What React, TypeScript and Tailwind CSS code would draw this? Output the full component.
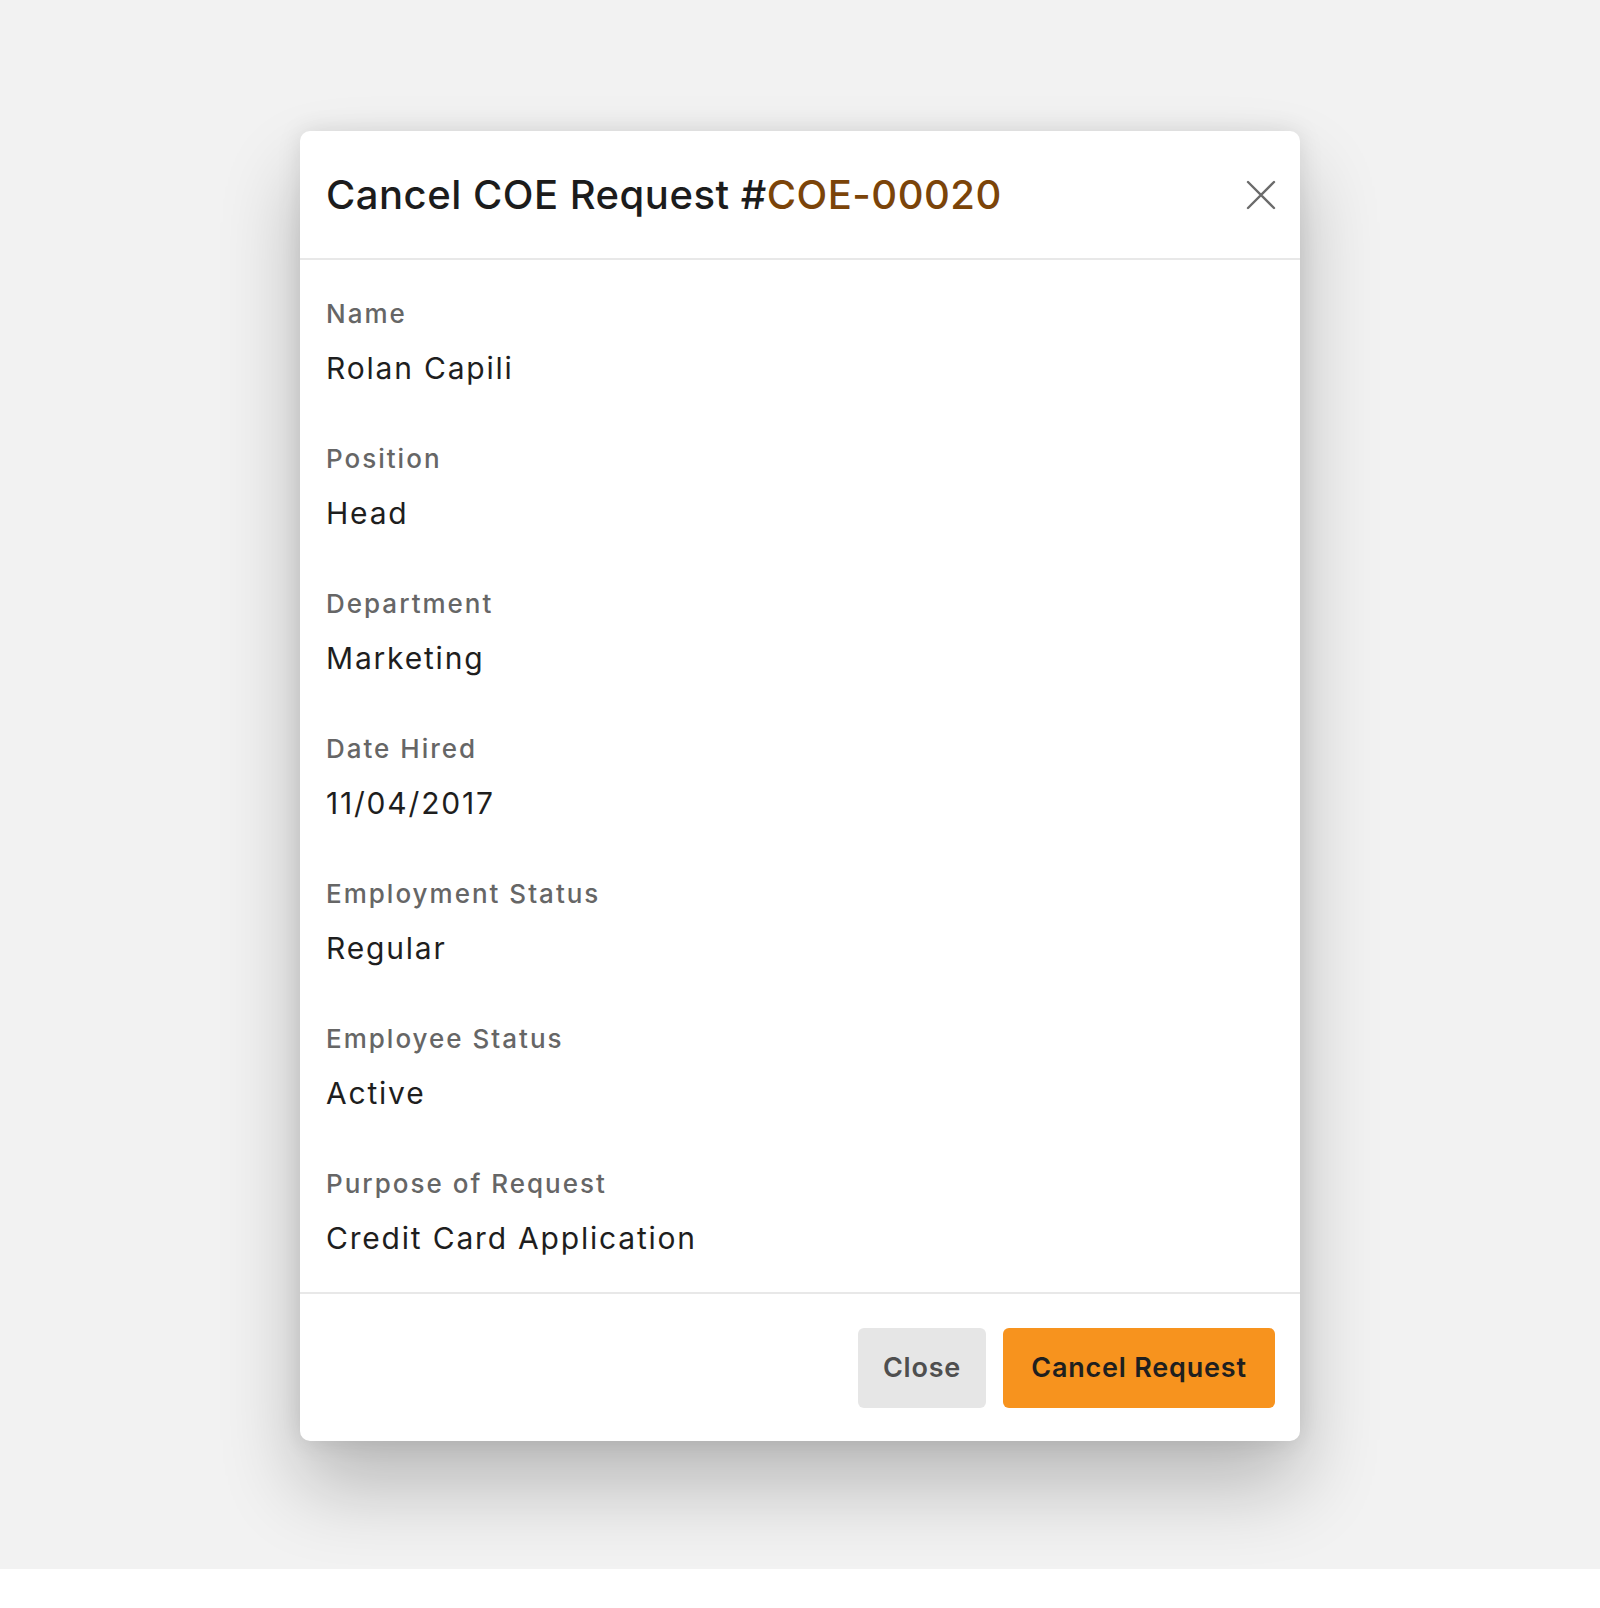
const FIELDS = [
  ["Name", "Rolan Capili"],
  ["Position", "Head"],
  ["Department", "Marketing"],
  ["Date Hired", "11/04/2017"],
  ["Employment Status", "Regular"],
  ["Employee Status", "Active"],
  ["Purpose of Request", "Credit Card Application"],
];

function CloseIcon() {
  return (
    <svg width="32" height="32" viewBox="0 0 32 32" fill="none" stroke="#6b6b6b" strokeWidth="2.4" strokeLinecap="round">
      <path d="M3 3 L29 29 M29 3 L3 29" />
    </svg>
  );
}

export default function App() {
  return (
    <div className="bg-white font-['Inter',sans-serif]">
      <div className="flex h-[1569px] justify-center bg-[#f2f2f2] pt-[131px]">
        <div className="h-fit w-[1000px] rounded-[10px] bg-white shadow-[0_45px_80px_rgba(0,0,0,0.24),0_0_24px_rgba(0,0,0,0.1)]">
          <div className="flex h-[129px] items-center justify-between border-b-2 border-[#e8e8e8] pl-[26px] pr-[23px]">
            <h2 className="text-[40px] font-medium tracking-[0.5px] text-[#1c1c1c]">
              Cancel COE Request #<span className="text-[#7b4409]">COE-00020</span>
            </h2>
            <button className="flex h-[32px] w-[32px] items-center justify-center">
              <CloseIcon />
            </button>
          </div>

          <div className="flex flex-col gap-[56px] px-[26px] pb-[35px] pt-[38px]">
            {FIELDS.map(([label, value]) => (
              <div key={label} className="flex flex-col gap-[19px]">
                <div className="text-[26px] leading-[32px] font-medium tracking-[2px] text-[#666666]">{label}</div>
                <div className="text-[30px] leading-[38px] tracking-[1.8px] text-[#1e1e1e]">{value}</div>
              </div>
            ))}
          </div>

          <div className="flex justify-end gap-[17px] border-t-2 border-[#e8e8e8] px-[25px] pb-[33px] pt-[34px]">
            <button className="h-[80px] w-[128px] rounded-[6px] bg-[#e6e6e6] text-[27px] font-semibold tracking-[0.8px] text-[#4f4f4f]">
              Close
            </button>
            <button className="h-[80px] w-[272px] rounded-[6px] bg-[#f7931e] text-[27px] font-semibold tracking-[0.8px] text-[#1f1f1f]">
              Cancel Request
            </button>
          </div>
        </div>
      </div>
      <div className="h-[39px]" />
    </div>
  );
}
